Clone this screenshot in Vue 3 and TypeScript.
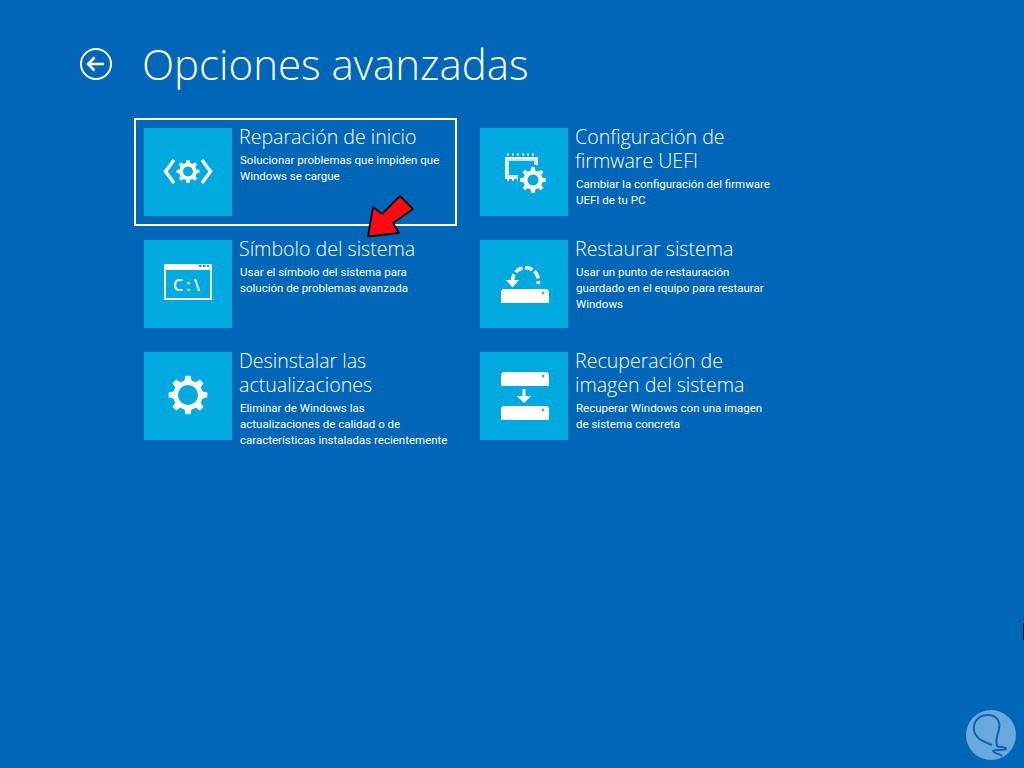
<script setup lang="ts">
function gear(cx: number, cy: number, outer: number, root: number, hole: number, teeth = 8): string {
  const step = (Math.PI * 2) / teeth
  let d = ''
  for (let i = 0; i < teeth; i++) {
    const a = i * step - Math.PI / 2
    const pts = [
      [root, a - step * 0.3],
      [outer, a - step * 0.17],
      [outer, a + step * 0.17],
      [root, a + step * 0.3],
    ]
    for (const [r, t] of pts) {
      d += `${d ? 'L' : 'M'}${(cx + r * Math.cos(t)).toFixed(2)} ${(cy + r * Math.sin(t)).toFixed(2)}`
    }
  }
  d += 'Z'
  d += `M${cx - hole} ${cy}a${hole} ${hole} 0 1 0 ${hole * 2} 0a${hole} ${hole} 0 1 0 ${-hole * 2} 0Z`
  return d
}

const options = [
  { id: 'repair', title: 'Reparación de inicio', lines: ['Solucionar problemas que impiden que', 'Windows se cargue'], focused: true },
  { id: 'uefi', title: 'Configuración de firmware UEFI', lines: ['Cambiar la configuración del firmware', 'UEFI de tu PC'] },
  { id: 'cmd', title: 'Símbolo del sistema', lines: ['Usar el símbolo del sistema para', 'solución de problemas avanzada'] },
  { id: 'restore', title: 'Restaurar sistema', lines: ['Usar un punto de restauración', 'guardado en el equipo para restaurar', 'Windows'] },
  { id: 'updates', title: 'Desinstalar las actualizaciones', lines: ['Eliminar de Windows las', 'actualizaciones de calidad o de', 'características instaladas recientemente'] },
  { id: 'image', title: 'Recuperación de imagen del sistema', lines: ['Recuperar Windows con una imagen', 'de sistema concreta'] },
]
</script>

<template>
  <div class="screen">
    <header class="head">
      <svg class="back" width="34" height="34" viewBox="0 0 34 34" fill="none" stroke="#fff">
        <circle cx="17" cy="17" r="15" stroke-width="2" />
        <path d="M9 17h16M15.500 10.500L9 17l6.500 6.500" stroke-width="2.600" />
      </svg>
      <h1>Opciones avanzadas</h1>
    </header>

    <div class="grid">
      <div v-for="o in options" :key="o.id" class="option" :class="{ focused: o.focused }">
        <div class="tile">
          <svg width="88" height="88" viewBox="0 0 88 88">
            <g v-if="o.id === 'repair'">
              <path d="M30 32L21.500 43.500L30 55M58 32L66.500 43.500L58 55" fill="none" stroke="#fff" stroke-width="3.400" />
              <path :d="gear(44, 43.500, 11.500, 8.800, 5)" fill="#fff" fill-rule="evenodd" />
            </g>
            <g v-else-if="o.id === 'uefi'">
              <path d="M27 26.500h30" stroke="#fff" stroke-width="2" stroke-dasharray="2 3" fill="none" />
              <path d="M27 52h14" stroke="#fff" stroke-width="2" stroke-dasharray="2 3" fill="none" />
              <rect x="26" y="30" width="31" height="20" fill="#bfeaf7" stroke="#fff" stroke-width="2" />
              <rect x="29" y="33" width="25" height="14" fill="#00a9e0" />
              <circle cx="53" cy="52" r="15.500" fill="#00a9e0" />
              <path :d="gear(53, 52, 13, 9.800, 5.500)" fill="#fff" fill-rule="evenodd" />
            </g>
            <g v-else-if="o.id === 'cmd'">
              <rect x="21" y="25" width="46" height="34" fill="none" stroke="#fff" stroke-width="2" />
              <rect x="20" y="24" width="48" height="6" fill="#fff" />
              <path d="M55 26h10" stroke="#00a9e0" stroke-width="2" stroke-dasharray="2.500 1.500" fill="none" />
              <text class="prompt" x="44" y="50.500" text-anchor="middle">C:\</text>
            </g>
            <g v-else-if="o.id === 'restore'">
              <path d="M32.500 42A13 13 0 1 1 58 44" fill="none" stroke="#fff" stroke-width="3.600" stroke-dasharray="8 2.500" />
              <path d="M26 40h13l-6.500 7.500z" fill="#fff" />
              <path d="M23 49h44l2 2v12H21V51z" fill="#fff" />
              <path d="M61.500 53h3M63 51.500v3" stroke="#00a9e0" stroke-width="1.200" />
            </g>
            <g v-else-if="o.id === 'updates'">
              <path :d="gear(44, 43, 19.500, 15, 10)" fill="#fff" fill-rule="evenodd" />
            </g>
            <g v-else>
              <path d="M23 20h44l2 2v12H21V22z" fill="#fff" />
              <path d="M61.500 24h3M63 22.500v3" stroke="#00a9e0" stroke-width="1.200" />
              <path d="M42.500 37h3v7H51l-7 7-7-7h5.500z" fill="#fff" />
              <path d="M23 54h44l2 2v12H21V56z" fill="#fff" />
              <path d="M61.500 58h3M63 56.500v3" stroke="#00a9e0" stroke-width="1.200" />
            </g>
          </svg>
        </div>
        <div class="info">
          <div class="title">{{ o.title }}</div>
          <div class="desc">
            <div v-for="line in o.lines" :key="line">{{ line }}</div>
          </div>
        </div>
      </div>
    </div>

    <svg class="pointer" width="60" height="50" viewBox="360 192 60 50">
      <path d="M368 236.500L373 207L382 214L400 196L413 209L393 223L399 233Z" fill="#ff0a14" stroke="#111" stroke-width="2" stroke-linejoin="round" />
    </svg>

    <svg class="mark" width="52" height="52" viewBox="0 0 52 52">
      <circle cx="26" cy="26" r="25" fill="#6aa9dc" />
      <path d="M27 36C20 33 10 30 9 21C8 12 14 6 23 6C31 6 36 12 34 20C33 26 30 30 32 37C34 39 40 37 41 40C38 42 30 40 28 42C30 45 35 45 37 47" fill="none" stroke="#0a62b2" stroke-width="2" />
    </svg>

    <div class="edge"></div>
  </div>
</template>

<style>
html, body {
  margin: 0;
  background: #0067b8;
}
</style>

<style scoped>
.screen {
  position: relative;
  width: 1024px;
  height: 768px;
  overflow: hidden;
  background: #0067b8;
  color: #fff;
  font-family: "Open Sans", "Noto Sans", sans-serif;
}
.head {
  display: flex;
  align-items: center;
  gap: 29px;
  height: 64px;
  padding: 32px 0 0 79px;
}
h1 {
  margin: 0;
  font-size: 42px;
  font-weight: 300;
  line-height: 64px;
}
.back {
  flex: none;
}
.grid {
  display: grid;
  grid-template-columns: 323px 323px;
  grid-auto-rows: 108px;
  column-gap: 13px;
  row-gap: 4px;
  margin: 22px 0 0 134px;
}
.option {
  display: flex;
  gap: 7px;
  box-sizing: border-box;
  padding: 8px;
  border: 2px solid transparent;
}
.option.focused {
  border-color: #fff;
}
.tile {
  flex: none;
  width: 88px;
  height: 88px;
  background: #00a9e0;
}
.tile svg {
  display: block;
}
.prompt {
  fill: #fff;
  font-family: "Open Sans", sans-serif;
  font-size: 16px;
  font-weight: 600;
  letter-spacing: 3px;
}
.info {
  width: 208px;
  margin-top: -3px;
}
.title {
  font-size: 19.600px;
  font-weight: 300;
  line-height: 24px;
}
.desc {
  margin-top: 3px;
  padding-left: 1px;
  font-family: Roboto, sans-serif;
  font-size: 11.500px;
  line-height: 16px;
  white-space: nowrap;
}
.pointer {
  position: absolute;
  left: 360px;
  top: 192px;
}
.mark {
  position: absolute;
  left: 965px;
  top: 709px;
}
.edge {
  position: absolute;
  right: 0;
  top: 623px;
  width: 1px;
  height: 17px;
  background: #111;
}
</style>
